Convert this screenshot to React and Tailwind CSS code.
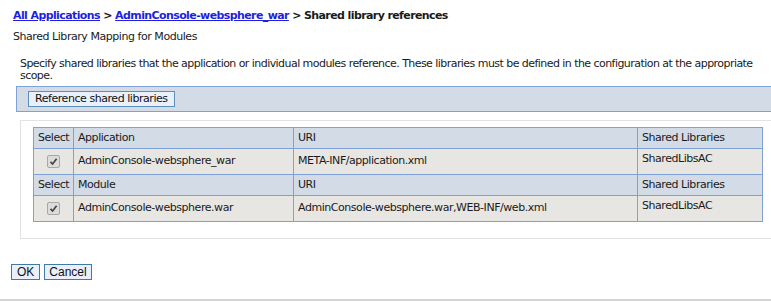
import React from 'react';

const rows = [
  { head: 'Application', name: 'AdminConsole-websphere_war', uri: 'META-INF/application.xml', lib: 'SharedLibsAC' },
  { head: 'Module', name: 'AdminConsole-websphere.war', uri: 'AdminConsole-websphere.war,WEB-INF/web.xml', lib: 'SharedLibsAC' },
];

const Check = () => (
  <span className="inline-flex h-[13px] w-[13px] items-center justify-center border border-[#a8a8a8] bg-[#dcdcdc] rounded-[2px]">
    <svg width="9" height="9" viewBox="0 0 9 9">
      <path d="M1.5 4.8 L3.6 7 L7.6 1.8" fill="none" stroke="#444" strokeWidth="1.7" />
    </svg>
  </span>
);

export default function App() {
  return (
    <div className="w-[771px] h-[303px] overflow-hidden bg-white text-[11px] text-[#1a1a1a] font-['DejaVu_Sans',Verdana,sans-serif] tracking-[-0.45px]">
      <div className="px-[13px] pt-[9px] font-bold text-[11px] leading-[14px] tracking-[-0.6px]">
        <a className="text-[#1f1fe0] underline">All Applications</a>
        <span> &gt; </span>
        <a className="text-[#1f1fe0] underline">AdminConsole-websphere_war</a>
        <span> &gt; Shared library references</span>
      </div>
      <div className="px-[13px] pt-[7px] leading-[14px]">Shared Library Mapping for Modules</div>
      <div className="pl-[20px] pr-[2px] pt-[14px] leading-[12px] tracking-[-0.55px]">
        Specify shared libraries that the application or individual modules reference. These libraries must be defined in the configuration at the appropriate scope.
      </div>
      <div className="ml-[16px] mt-[4px] h-[26px] border-y border-l border-[#7fa2d6] bg-[#d3dbe6] flex items-center pl-[11px]">
        <button className="h-[16px] px-[6px] border border-[#5b8fb8] bg-[#e9f0fb] text-[11px] leading-[14px] text-[#111]">
          Reference shared libraries
        </button>
      </div>
      <div className="ml-[20px] mt-[8px] h-[119px] border-t border-b border-l border-[#e2e2e2] pt-[6px] pl-[12px]">
        <table className="w-[729px] border-collapse border border-[#7fa2d6] table-fixed">
          <colgroup>
            <col className="w-[40px]" />
            <col className="w-[220px]" />
            <col className="w-[344px]" />
            <col className="w-[125px]" />
          </colgroup>
          <tbody>
            {rows.map((r) => (
              <React.Fragment key={r.head}>
                <tr className="bg-[#d3dbe6] h-[21px]">
                  <td className="border border-[#7fa2d6] px-[4px]">Select</td>
                  <td className="border border-[#7fa2d6] px-[4px]">{r.head}</td>
                  <td className="border border-[#7fa2d6] px-[4px]">URI</td>
                  <td className="border border-[#7fa2d6] px-[4px]">Shared Libraries</td>
                </tr>
                <tr className="bg-[#e8e6e2] h-[26px]">
                  <td className="border border-[#7fa2d6] text-center align-middle">
                    <div className="flex justify-center"><Check /></div>
                  </td>
                  <td className="border border-[#7fa2d6] px-[4px] align-middle">{r.name}</td>
                  <td className="border border-[#7fa2d6] px-[4px] align-middle">{r.uri}</td>
                  <td className="border border-[#7fa2d6] px-[4px] align-top pt-[2px]">{r.lib}</td>
                </tr>
              </React.Fragment>
            ))}
          </tbody>
        </table>
      </div>
      <div className="flex gap-[4px] pl-[11px] mt-[25px] font-['Liberation_Sans',Arial,sans-serif] tracking-normal text-[12px]">
        <button className="h-[16px] px-[5px] border border-[#3f7ba3] bg-[#e9f0fb] leading-[14px] text-[#111]">OK</button>
        <button className="h-[16px] px-[4px] border border-[#3f7ba3] bg-[#e9f0fb] leading-[14px] text-[#111]">Cancel</button>
      </div>
      <div className="mt-[19px] border-t-2 border-[#d4d4d4]" />
    </div>
  );
}
